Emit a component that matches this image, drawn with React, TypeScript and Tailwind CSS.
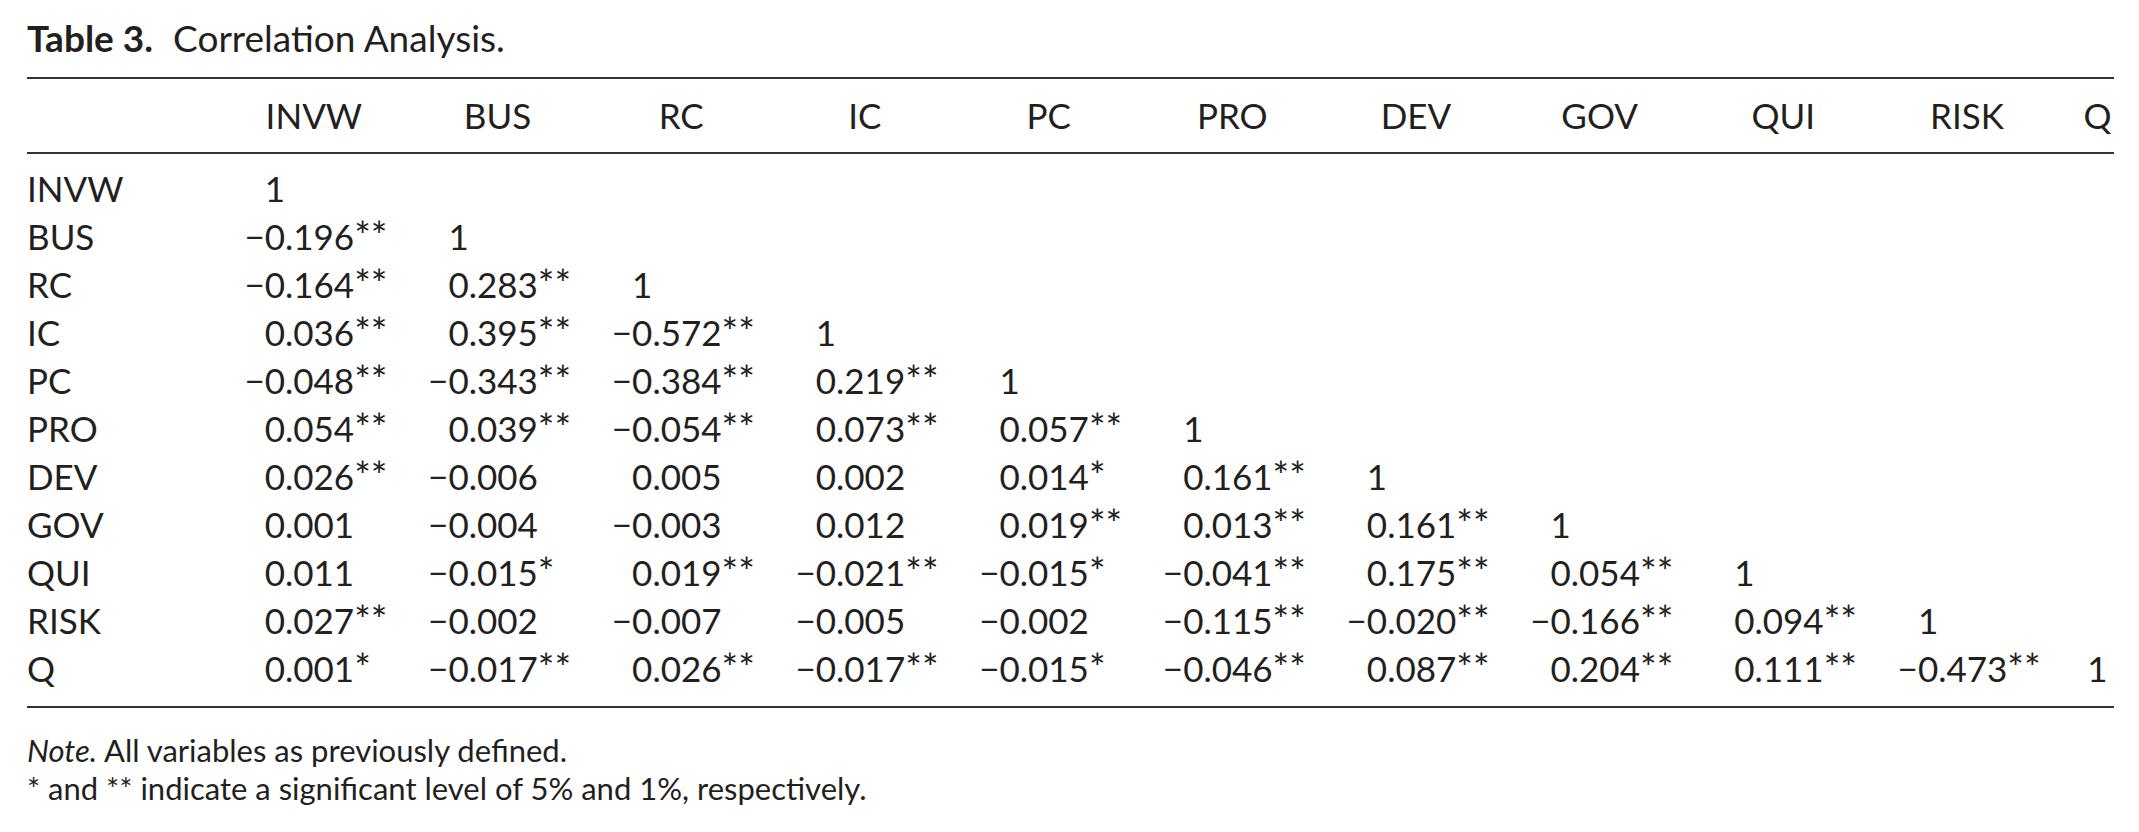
const cols = ['INVW', 'BUS', 'RC', 'IC', 'PC', 'PRO', 'DEV', 'GOV', 'QUI', 'RISK', 'Q'];

const rows: [string, string[]][] = [
  ['INVW', ['1']],
  ['BUS', ['−0.196**', '1']],
  ['RC', ['−0.164**', '0.283**', '1']],
  ['IC', ['0.036**', '0.395**', '−0.572**', '1']],
  ['PC', ['−0.048**', '−0.343**', '−0.384**', '0.219**', '1']],
  ['PRO', ['0.054**', '0.039**', '−0.054**', '0.073**', '0.057**', '1']],
  ['DEV', ['0.026**', '−0.006', '0.005', '0.002', '0.014*', '0.161**', '1']],
  ['GOV', ['0.001', '−0.004', '−0.003', '0.012', '0.019**', '0.013**', '0.161**', '1']],
  ['QUI', ['0.011', '−0.015*', '0.019**', '−0.021**', '−0.015*', '−0.041**', '0.175**', '0.054**', '1']],
  ['RISK', ['0.027**', '−0.002', '−0.007', '−0.005', '−0.002', '−0.115**', '−0.020**', '−0.166**', '0.094**', '1']],
  ['Q', ['0.001*', '−0.017**', '0.026**', '−0.017**', '−0.015*', '−0.046**', '0.087**', '0.204**', '0.111**', '−0.473**', '1']],
];

const grid = 'grid grid-cols-[195px_repeat(10,183.7px)_1fr]';

// decimal-aligned cell: integer part right-aligned up to the point
function Cell({ v, last }: { v?: string; last: boolean }) {
  if (!v) return <div />;
  if (last) return <div className="pl-[22px] text-center">{v}</div>;
  const i = v.indexOf('.');
  const whole = i < 0 ? v : v.slice(0, i);
  const rest = i < 0 ? '' : v.slice(i);
  const stars = rest.match(/\*+$/)?.[0] ?? '';
  const num = stars ? rest.slice(0, -stars.length) : rest;
  return (
    <div className="flex whitespace-nowrap">
      <span className="w-[63px] shrink-0 text-right">{whole}</span>
      <span>
        {num}
        {stars && <span className="text-[1.12em] leading-none">{stars}</span>}
      </span>
    </div>
  );
}

export default function App() {
  return (
    <div className="min-h-screen bg-white text-[#231f20] font-[Lato,sans-serif]">
      <div className="ml-[27px] w-[2087px] pt-[18px]">
        <h1 className="text-[37px] leading-[40px] whitespace-nowrap">
          <span className="font-bold">Table 3.</span>
          <span className="ml-[20px]">Correlation Analysis.</span>
        </h1>

        <div className="mt-[19px] h-[2px] bg-[#333]" />

        {/* Header */}
        <div className={`${grid} pt-[16px] pb-[17px] text-[35px] leading-[40px]`}>
          <div />
          {cols.map((c, i) => (
            <div key={c} className={i === cols.length - 1 ? 'pl-[22px] text-center' : 'text-center'}>
              {c}
            </div>
          ))}
        </div>

        <div className="h-[2px] bg-[#333]" />

        {/* Body */}
        <div className="pt-[10px] text-[35px] leading-[48px]">
          {rows.map(([label, vals]) => (
            <div key={label} className={`${grid} h-[48px]`}>
              <div>{label}</div>
              {cols.map((c, i) => (
                <Cell key={c} v={vals[i]} last={i === cols.length - 1} />
              ))}
            </div>
          ))}
        </div>

        <div className="mt-[14px] h-[2px] bg-[#333]" />

        {/* Notes */}
        <div className="mt-[23px] text-[31px] leading-[38px]">
          <p>
            <span className="italic">Note.</span> All variables as previously defined.
          </p>
          <p>* and ** indicate a significant level of 5% and 1%, respectively.</p>
        </div>
      </div>
    </div>
  );
}
